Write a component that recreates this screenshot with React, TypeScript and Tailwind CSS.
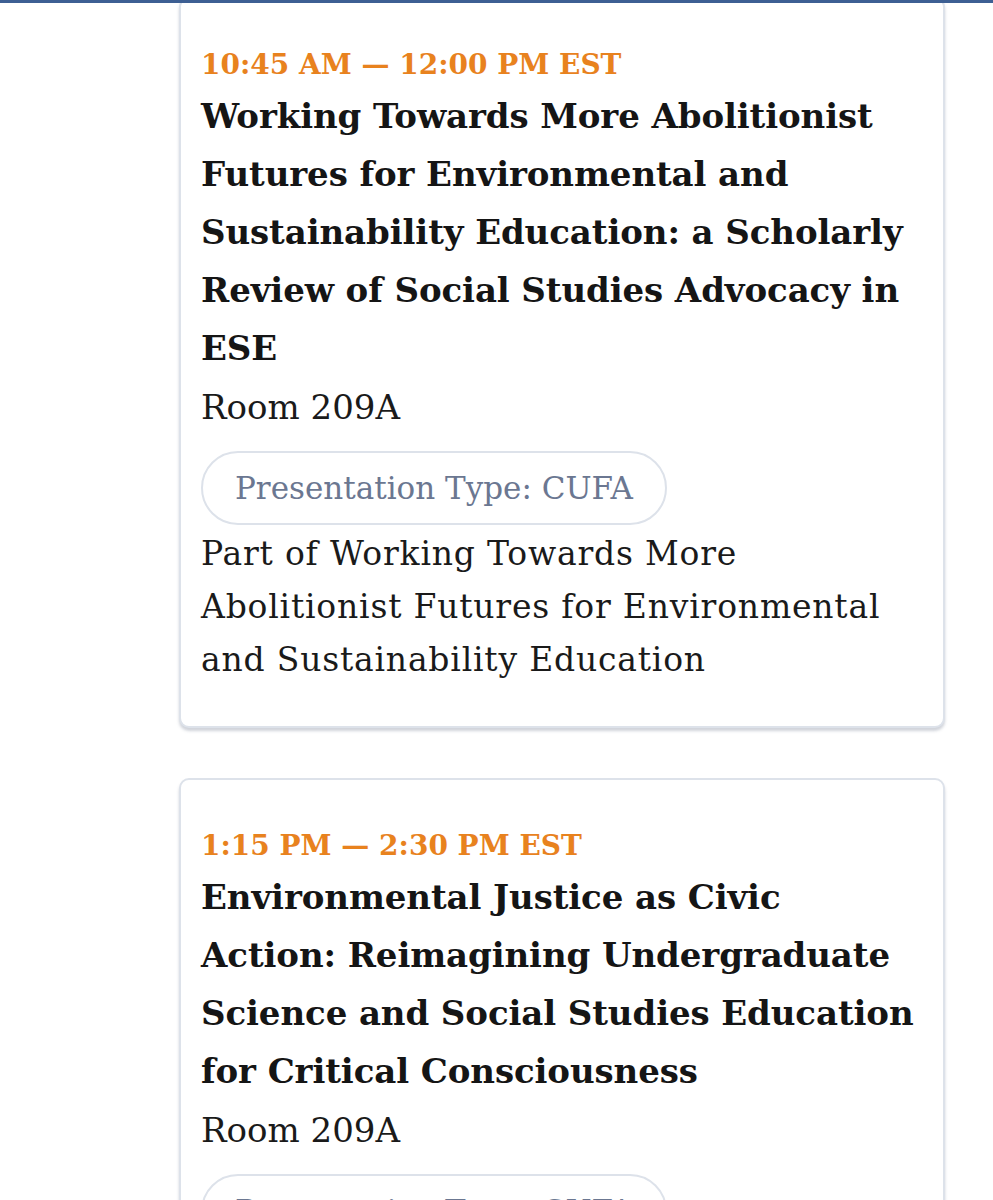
import React from "react";

const sessions = [
  {
    time: "10:45 AM — 12:00 PM EST",
    title:
      "Working Towards More Abolitionist Futures for Environmental and Sustainability Education: a Scholarly Review of Social Studies Advocacy in ESE",
    room: "Room 209A",
    type: "CUFA",
    part: "Part of Working Towards More Abolitionist Futures for Environmental and Sustainability Education",
  },
  {
    time: "1:15 PM — 2:30 PM EST",
    title:
      "Environmental Justice as Civic Action: Reimagining Undergraduate Science and Social Studies Education for Critical Consciousness",
    room: "Room 209A",
    type: "CUFA",
    part: "Part of Environmental Justice as Civic Action",
  },
];

function SessionCard(props: { s: (typeof sessions)[number] }) {
  const s = props.s;
  return (
    <div className="rounded-[10px] border-2 border-[#dde2ea] bg-white px-[20px] pt-[43px] pb-[40px] shadow-[0_3px_3px_rgba(120,130,150,0.35)]">
      <div className="text-[28px] leading-[45px] font-bold text-[#e8821e]">
        {s.time}
      </div>
      <h2 className="text-[34px] leading-[58px] font-bold tracking-[-0.1px] text-[#151515]">
        {s.title}
      </h2>
      <div className="text-[34px] leading-[60px] text-[#1a1a1a]">{s.room}</div>
      <div className="mt-[14px] inline-flex rounded-full border-2 border-[#dde2ea] px-[32px] py-[11px] text-[31px] leading-[48px] text-[#6b7791]">
        Presentation Type: {s.type}
      </div>
      <p className="mt-[2px] text-[33px] leading-[53px] tracking-[0.8px] text-[#1a1a1a]">
        {s.part}
      </p>
    </div>
  );
}

export default function App() {
  return (
    <div
      className="min-h-[1200px] bg-white border-t-[3px] border-[#3d5f93] overflow-hidden"
      style={{ fontFamily: '"DejaVu Serif", "Liberation Serif", serif' }}
    >
      <div className="flex flex-col gap-[50px] pl-[179px] pr-[48px] -mt-[6px]">
        {sessions.map((s, i) => (
          <SessionCard key={i} s={s} />
        ))}
      </div>
    </div>
  );
}
